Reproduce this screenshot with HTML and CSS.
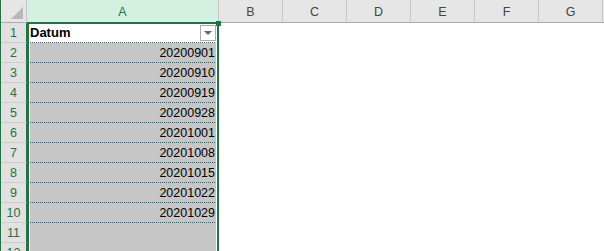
FILE: index.html
```html
<!DOCTYPE html>
<html lang="en">
<head>
    <meta charset="UTF-8">
    <title>Sheet1</title>
    <link rel="stylesheet" href="styles.css">
</head>
<body>
    <div class="sheet">
        <!-- column headers -->
        <div class="corner">
            <svg width="14" height="14" viewBox="0 0 14 14"><polygon points="13,1 13,13 1,13" fill="#b8b8b8"/></svg>
        </div>
        <div class="colhead active">A</div>
        <div class="colhead">B</div>
        <div class="colhead">C</div>
        <div class="colhead">D</div>
        <div class="colhead">E</div>
        <div class="colhead">F</div>
        <div class="colhead">G</div>
        <div class="colhead last"></div>

        <!-- rows -->
        <div class="rowhead">1</div>
        <div class="cell title">
            <span>Datum</span>
            <span class="filter"><svg width="8" height="5" viewBox="0 0 8 5"><polygon points="0,0 8,0 4,4" fill="#666"/></svg></span>
        </div>
        <div class="rest"></div>

        <div class="rowhead">2</div><div class="cell sel table">20200901</div><div class="rest"></div>
        <div class="rowhead">3</div><div class="cell sel table">20200910</div><div class="rest"></div>
        <div class="rowhead">4</div><div class="cell sel table">20200919</div><div class="rest"></div>
        <div class="rowhead">5</div><div class="cell sel table">20200928</div><div class="rest"></div>
        <div class="rowhead">6</div><div class="cell sel table">20201001</div><div class="rest"></div>
        <div class="rowhead">7</div><div class="cell sel table">20201008</div><div class="rest"></div>
        <div class="rowhead">8</div><div class="cell sel table">20201015</div><div class="rest"></div>
        <div class="rowhead">9</div><div class="cell sel table">20201022</div><div class="rest"></div>
        <div class="rowhead">10</div><div class="cell sel table">20201029</div><div class="rest"></div>
        <div class="rowhead">11</div><div class="cell sel"></div><div class="rest"></div>
        <div class="rowhead">12</div><div class="cell sel"></div><div class="rest"></div>

        <!-- selection frame over column A -->
        <div class="selection">
            <div class="handle"></div>
        </div>
    </div>
</body>
</html>
```

FILE: styles.css
```css
* {
    margin: 0;
    padding: 0;
    box-sizing: border-box;
}

body {
    background: #fff;
    font-family: 'Liberation Sans', Arial, sans-serif;
    overflow: hidden;
    height: 251px;
}

.sheet {
    position: relative;
    display: grid;
    grid-template-columns: 26px 192px repeat(6, 64px) 20px;
    grid-template-rows: 23px repeat(12, 20px);
    border-left: 1px solid #217346;
}

.corner {
    background: #e6e6e6;
    border-right: 1px solid #c6c6c6;
    border-bottom: 1px solid #ababab;
    display: flex;
    align-items: flex-end;
    justify-content: flex-end;
    padding: 0 2px 2px 0;
}

.corner svg {
    display: block;
}

.colhead {
    background: #e6e6e6;
    border-right: 1px solid #c8c8c8;
    border-bottom: 1px solid #ababab;
    color: #444;
    font-size: 12.5px;
    text-align: center;
    padding-top: 6px;
    line-height: 13px;
}

.colhead.active {
    background: #d3f0e0;
    color: #217346;
}

.colhead.last {
    border-right: none;
}

.rowhead {
    background: #e1e1e1;
    border-right: 1px solid #217346;
    border-bottom: 1px solid #cdcdcd;
    color: #217346;
    font-size: 12.5px;
    line-height: 20px;
    text-align: center;
}

.cell {
    font-size: 12.5px;
    line-height: 20px;
    color: #000;
    text-align: right;
    padding: 0 4px 0 3px;
    background: #fff;
}

.cell.sel {
    background: #c6c6c6;
}

.cell.table,
.cell.title {
    border-bottom: 1px dotted #2a6675;
}

.cell.title {
    display: flex;
    align-items: center;
    justify-content: space-between;
    text-align: left;
    font-weight: bold;
    font-size: 13px;
    padding-right: 3px;
}

.filter {
    width: 16px;
    height: 16px;
    border: 1px solid #ababab;
    background: #fff;
    display: flex;
    align-items: center;
    justify-content: center;
    margin-top: 1px;
}

.filter svg {
    display: block;
}

.rest {
    grid-column: 3 / -1;
    background: #fff;
}

.selection {
    position: absolute;
    left: 26px;
    top: 22px;
    width: 192px;
    height: 260px;
    border: 2px solid #217346;
    box-shadow: inset 0 0 0 1px #fff;
    pointer-events: none;
}

.handle {
    position: absolute;
    left: 187px;
    top: -3px;
    width: 5px;
    height: 5px;
    background: #217346;
}
```
